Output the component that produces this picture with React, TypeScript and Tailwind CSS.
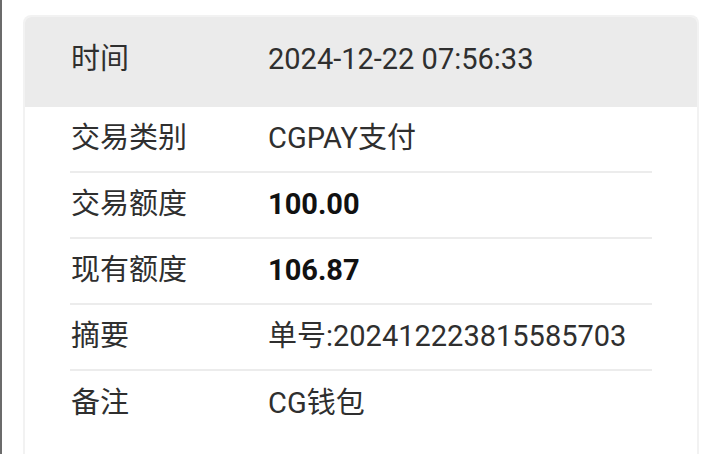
import React from 'react';

interface Row {
  label: string;
  value: string;
  bold?: boolean;
}

const rows: Row[] = [
  { label: '交易类别', value: 'CGPAY支付' },
  { label: '交易额度', value: '100.00', bold: true },
  { label: '现有额度', value: '106.87', bold: true },
  { label: '摘要', value: '单号:202412223815585703' },
  { label: '备注', value: 'CG钱包' },
];

export default function App() {
  return (
    <div
      className="w-[720px] h-[454px] overflow-hidden bg-white border-l-2 border-[#6b6b6b] pl-[21px] pt-[15px] text-[29px] text-[#2f2f2f]"
      style={{ fontFamily: 'Roboto, "Noto Sans CJK SC", sans-serif' }}
    >
      <div className="w-[676px] rounded-t-lg border-2 border-b-0 border-[#f2f2f2] pb-[40px]">
        <div className="flex h-[90px] items-center bg-[#ebebeb] pl-[46px] rounded-t-md pb-[4px]">
          <span className="w-[197px]">时间</span>
          <span>2024-12-22 07:56:33</span>
        </div>
        <div className="mx-[45px]">
          {rows.map((r, i) => (
            <div
              key={r.label}
              className={`flex h-[66px] items-center pl-[1px] ${i < rows.length - 1 ? 'border-b-2 border-[#ececec]' : ''}`}
            >
              <span className="w-[197px]">{r.label}</span>
              <span className={r.bold ? 'font-bold text-[#111]' : ''}>{r.value}</span>
            </div>
          ))}
        </div>
      </div>
    </div>
  );
}
